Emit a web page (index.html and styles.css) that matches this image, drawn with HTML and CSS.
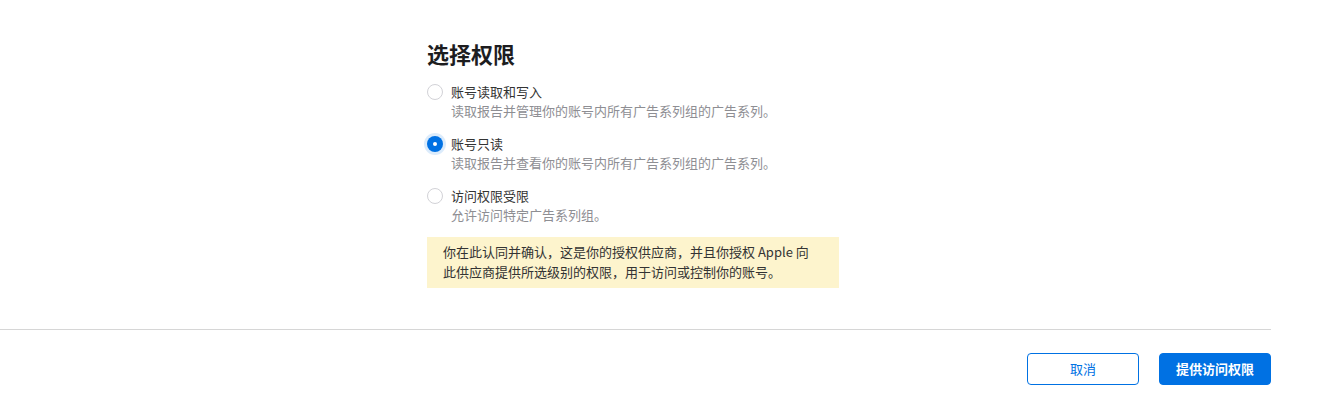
FILE: index.html
```html
<!DOCTYPE html>
<html lang="zh-CN">
<head>
<meta charset="utf-8">
<title>选择权限</title>
<link rel="stylesheet" href="styles.css">
</head>
<body>
<div class="page">
  <section class="content">
    <h1 class="title">选择权限</h1>
    <div class="options">
      <label class="option">
        <span class="radio"></span>
        <span class="option-text">
          <span class="option-label">账号读取和写入</span>
          <span class="option-desc">读取报告并管理你的账号内所有广告系列组的广告系列。</span>
        </span>
      </label>
      <label class="option">
        <span class="radio radio-checked"></span>
        <span class="option-text">
          <span class="option-label">账号只读</span>
          <span class="option-desc">读取报告并查看你的账号内所有广告系列组的广告系列。</span>
        </span>
      </label>
      <label class="option">
        <span class="radio"></span>
        <span class="option-text">
          <span class="option-label">访问权限受限</span>
          <span class="option-desc">允许访问特定广告系列组。</span>
        </span>
      </label>
    </div>
    <div class="notice">你在此认同并确认，这是你的授权供应商，并且你授权 Apple 向<br>此供应商提供所选级别的权限，用于访问或控制你的账号。</div>
  </section>
  <footer class="footer">
    <button class="btn btn-secondary" type="button">取消</button>
    <button class="btn btn-primary" type="button">提供访问权限</button>
  </footer>
</div>
</body>
</html>
```

FILE: styles.css
```css
* {
  box-sizing: border-box;
}

html, body {
  margin: 0;
  padding: 0;
  background: #ffffff;
}

body {
  font-family: "Noto Sans CJK SC", "Noto Sans", "Liberation Sans", sans-serif;
  color: #1d1d1f;
  -webkit-font-smoothing: antialiased;
}

.page {
  width: 1271px;
}

.content {
  padding: 39px 0 41px 427px;
  border-bottom: 1px solid #d6d6d6;
}

.title {
  margin: 0;
  font-size: 22px;
  line-height: 28px;
  font-weight: 700;
  color: #1d1d1f;
}

.options {
  display: flex;
  flex-direction: column;
  gap: 14px;
  margin-top: 15px;
}

.option {
  display: flex;
  align-items: flex-start;
  gap: 8px;
}

.radio {
  flex: none;
  width: 16px;
  height: 16px;
  margin-top: 2px;
  border-radius: 50%;
  border: 1px solid #d2d2d7;
  background: #ffffff;
  display: flex;
  align-items: center;
  justify-content: center;
}

.radio-checked {
  border: none;
  background: #0071e3;
  box-shadow: 0 0 0 3px rgba(0, 113, 227, 0.14);
}

.radio-checked::after {
  content: "";
  width: 4px;
  height: 4px;
  border-radius: 50%;
  background: #ffffff;
}

.option-text {
  display: flex;
  flex-direction: column;
}

.option-label {
  font-size: 13px;
  line-height: 20px;
  color: #333333;
}

.option-desc {
  font-size: 13px;
  line-height: 18px;
  color: #8e8e93;
}

.notice {
  margin-top: 13px;
  width: 412px;
  background: #fdf4cd;
  padding: 5px 16px 6px;
  font-size: 13px;
  line-height: 20px;
  color: #333333;
}

.footer {
  display: flex;
  justify-content: flex-end;
  gap: 20px;
  padding-top: 23px;
}

.btn {
  width: 112px;
  height: 32px;
  border-radius: 4px;
  font-family: "Noto Sans CJK SC", "Noto Sans", sans-serif;
  font-size: 13px;
  line-height: 20px;
  cursor: pointer;
}

.btn-secondary {
  background: #ffffff;
  border: 1px solid #0071e3;
  color: #0071e3;
}

.btn-primary {
  background: #0071e3;
  border: 1px solid #0071e3;
  color: #ffffff;
  font-weight: 700;
}
```
